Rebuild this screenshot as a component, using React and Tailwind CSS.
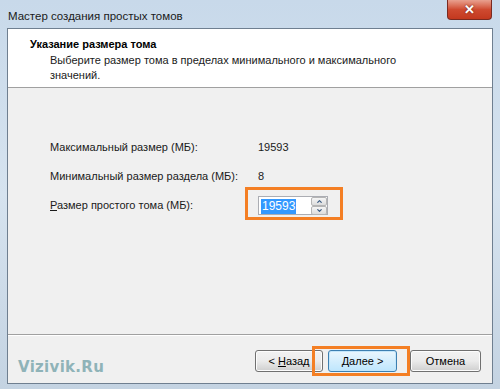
import { ChevronUp, ChevronDown } from "lucide-react";

const font = { fontFamily: '"Liberation Sans", Arial, sans-serif' };

const WinButton = ({ children, active }) => (
  <div
    className={
      "flex items-center justify-center h-[22px] rounded-[3px] border text-[11px] text-black " +
      (active
        ? "border-[#3c7fb1] bg-gradient-to-b from-[#eaf6fd] to-[#bee6fd] shadow-[inset_0_0_0_1px_#c3e6fb]"
        : "border-[#707070] bg-gradient-to-b from-[#f2f2f2] via-[#ebebeb] to-[#cfcfcf] shadow-[inset_0_0_0_1px_#fcfcfc]")
    }
  >
    {children}
  </div>
);

export default function App() {
  return (
    <div
      className="w-[500px] h-[389px] flex flex-col bg-gradient-to-b from-[#c8d9ea] via-[#d6e3ef] to-[#c4d3e2] overflow-hidden"
      style={font}
    >
      {/* Title bar */}
      <div className="h-[28px] flex items-start justify-between pl-[8px] pr-[8px]">
        <span className="text-[11.5px] text-[#1a1a1a] mt-[8px]">Мастер создания простых томов</span>
        <div className="w-[45px] h-[20px] rounded-b-[4px] border border-t-0 border-[#7a2a20] bg-gradient-to-b from-[#e8a08f] via-[#cf4a30] to-[#c3381e] flex items-center justify-center">
          <span className="text-white text-[13px] font-bold leading-none" style={{ textShadow: "0 0 2px #5a1a10" }}>
            ✕
          </span>
        </div>
      </div>

      {/* Client area */}
      <div className="mx-[7px] h-[356px] border border-[#6f7f90] flex flex-col bg-[#f0f0f0]">
        {/* Header */}
        <div className="h-[59px] bg-white border-b border-[#a0a0a0] pl-[22px] pt-[8px]">
          <div className="text-[11px] font-bold text-black leading-[15px]">Указание размера тома</div>
          <div className="pl-[20px] text-[11px] text-[#1a1a1a] leading-[15px] mt-[1px] w-[380px]">
            Выберите размер тома в пределах минимального и максимального значений.
          </div>
        </div>

        {/* Body */}
        <div className="flex-1 border-b border-[#a0a0a0] shadow-[0_1px_0_#ffffff] pl-[42px] pt-[51px]">
          <div className="grid grid-cols-[208px_1fr] gap-y-[12px] text-[11px] text-[#1a1a1a] items-center">
            <div className="h-[17px] leading-[17px] whitespace-nowrap">Максимальный размер (МБ):</div>
            <div className="h-[17px] leading-[17px]">19593</div>
            <div className="h-[17px] leading-[17px] whitespace-nowrap">Минимальный размер раздела (МБ):</div>
            <div className="h-[17px] leading-[17px]">8</div>
            <div className="h-[17px] leading-[17px] whitespace-nowrap">
              <span className="underline">Р</span>азмер простого тома (МБ):
            </div>
            <div className="relative h-[17px]">
              <div className="absolute -left-[13px] -top-[10px] w-[98px] h-[33px] border-[3px] border-[#f47f24]" />
              <div className="absolute left-0 -top-[1px] flex h-[19px] w-[70px] border border-[#abadb3] bg-white">
                <div className="flex-1 pl-[2px] pt-[1px]">
                  <span className="bg-[#3399ff] text-white text-[12px] leading-[15px] px-[1px] inline-block">19593</span>
                </div>
                <div className="w-[16px] flex flex-col">
                  <div className="flex-1 border border-[#b5b5b5] rounded-[2px] bg-gradient-to-b from-[#f6f6f6] to-[#dcdcdc] flex items-center justify-center">
                    <ChevronUp size={7} strokeWidth={4} className="text-[#3a5b82]" />
                  </div>
                  <div className="flex-1 border border-[#b5b5b5] rounded-[2px] bg-gradient-to-b from-[#f6f6f6] to-[#dcdcdc] flex items-center justify-center">
                    <ChevronDown size={7} strokeWidth={4} className="text-[#3a5b82]" />
                  </div>
                </div>
              </div>
            </div>
          </div>
        </div>

        {/* Footer */}
        <div className="h-[48px] flex items-start pt-[15px] pl-[10px] pr-[11px]">
          <div
            className="text-[15px] font-bold text-[#8fb3b8] tracking-[0.3px] mt-[6px]"
            style={{ fontFamily: '"DejaVu Sans", "Liberation Sans", sans-serif' }}
          >
            Vizivik.Ru
          </div>
          <div className="flex-1" />
          <div className="w-[68px]">
            <WinButton>
              &lt; <span className="underline ml-[3px]">Н</span>азад
            </WinButton>
          </div>
          <div className="relative w-[69px] ml-[5px]">
            <div className="absolute -left-[16px] -top-[4px] w-[98px] h-[30px] border-[3px] border-[#f47f24]" />
            <WinButton active>
              <span className="underline">Д</span>алее &gt;
            </WinButton>
          </div>
          <div className="w-[71px] ml-[13px]">
            <WinButton>Отмена</WinButton>
          </div>
        </div>
      </div>
    </div>
  );
}
